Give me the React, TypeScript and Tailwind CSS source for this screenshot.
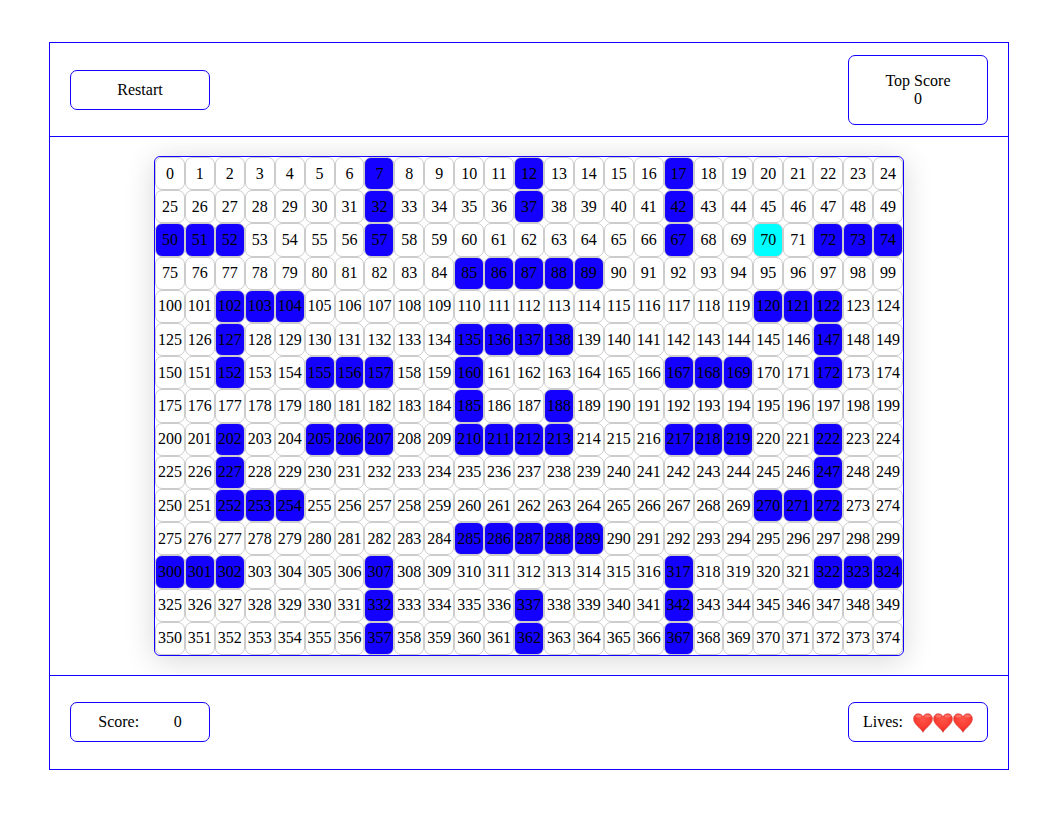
const COLUMNS = 25;
const ROWS = 15;
const PLAYER = 70;

const WALLS = new Set([
  7, 12, 17, 32, 37, 42, 50, 51, 52, 57, 67, 72, 73, 74, 85, 86, 87, 88, 89,
  102, 103, 104, 120, 121, 122, 127, 135, 136, 137, 138, 147, 152, 155, 156,
  157, 160, 167, 168, 169, 172, 185, 188, 202, 205, 206, 207, 210, 211, 212,
  213, 217, 218, 219, 222, 227, 247, 252, 253, 254, 270, 271, 272, 285, 286,
  287, 288, 289, 300, 301, 302, 307, 317, 322, 323, 324, 332, 337, 342, 357,
  362, 367,
]);

function cellColor(index: number): string {
  if (index === PLAYER) return "bg-[#00ffff]";
  return WALLS.has(index) ? "bg-[#1400ff]" : "bg-white";
}

function Heart() {
  return (
    <svg viewBox="0 0 20 20" className="size-5" aria-hidden="true">
      <defs>
        <radialGradient id="heart-fill" cx="0.5" cy="0.3" r="0.75">
          <stop offset="0" stopColor="#ff5548" />
          <stop offset="0.6" stopColor="#fa3a30" />
          <stop offset="1" stopColor="#d4221e" />
        </radialGradient>
      </defs>
      <path
        d="M10 19.3C9 17.3 6.8 15.4 4.4 13C2.1 10.7 0.6 8.6 0.6 5.7C0.6 2.8 2.7 0.7 5.3 0.7C7.4 0.7 9.1 1.8 10 3.6C10.9 1.8 12.6 0.7 14.7 0.7C17.3 0.7 19.4 2.8 19.4 5.7C19.4 8.6 17.9 10.7 15.6 13C13.2 15.4 11 17.3 10 19.3Z"
        fill="url(#heart-fill)"
        stroke="#cf2f2a"
        strokeWidth="0.5"
      />
      <ellipse cx="5.3" cy="3" rx="3" ry="1.5" fill="#ff9a90" opacity="0.5" />
      <ellipse cx="14.7" cy="3" rx="3" ry="1.5" fill="#ff9a90" opacity="0.5" />
    </svg>
  );
}

export default function App() {
  return (
    <div className="min-h-screen bg-white pt-[42px] pr-[17px] pb-[46px] pl-4 font-['Liberation_Serif',serif] text-base leading-[18px] text-black">
      <div className="mx-auto max-w-[960px] border border-[#1400ff]">
        <header className="flex items-center justify-between border-b border-[#1400ff] px-5 pt-3 pb-[11px]">
          <button
            type="button"
            className="h-10 w-[140px] rounded-[7px] border border-[#1400ff] bg-white"
          >
            Restart
          </button>
          <div className="flex h-[70px] w-[140px] flex-col items-center justify-center rounded-[7px] border border-[#1400ff]">
            <span>Top Score</span>
            <span>0</span>
          </div>
        </header>

        <main className="overflow-hidden px-5 py-[19px]">
          <div className="mx-auto grid h-[500px] max-w-[750px] grid-cols-25 grid-rows-15 rounded-md border border-[#1400ff] shadow-[0_4px_30px_rgba(0,0,0,0.16)]">
            {Array.from({ length: COLUMNS * ROWS }, (_, index) => (
              <div
                key={index}
                className={`flex min-w-0 items-center justify-center rounded-[7px] border border-[#cccccc] ${cellColor(index)}`}
              >
                {index}
              </div>
            ))}
          </div>
        </main>

        <footer className="flex items-center justify-between border-t border-[#1400ff] px-5 pt-[26px] pb-[27px]">
          <div className="flex h-10 w-[140px] items-center justify-around rounded-[7px] border border-[#1400ff] px-2.5">
            <span>Score:</span>
            <span>0</span>
          </div>
          <div className="flex h-10 w-[140px] items-center justify-center gap-2.5 rounded-[7px] border border-[#1400ff]">
            <span>Lives:</span>
            <span className="flex pt-0.5" role="img" aria-label="3 lives">
              <Heart />
              <Heart />
              <Heart />
            </span>
          </div>
        </footer>
      </div>
    </div>
  );
}
